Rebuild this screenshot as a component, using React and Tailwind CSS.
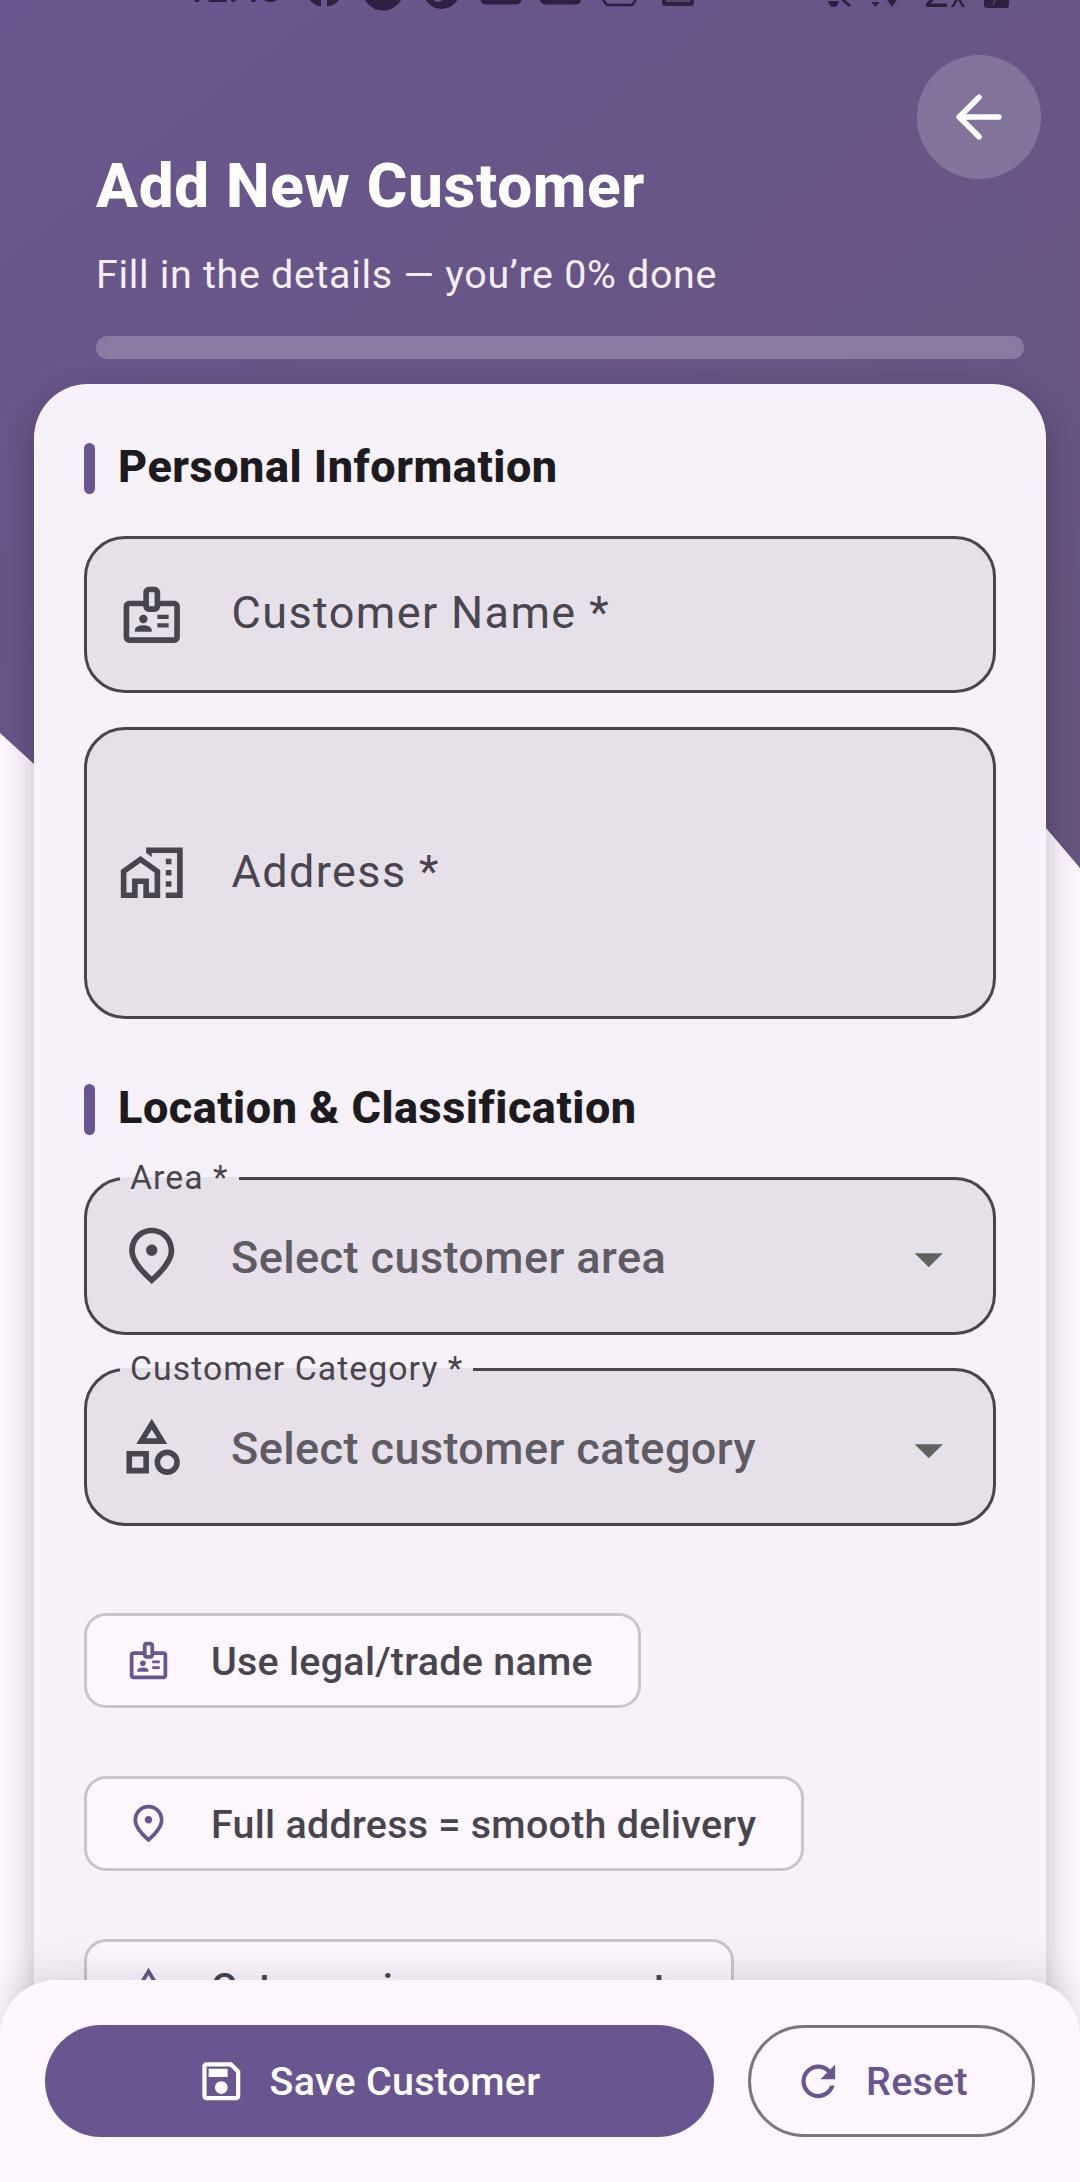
import React from "react";
import {
  MdOutlineBadge,
  MdOutlineHomeWork,
  MdOutlineFmdGood,
  MdOutlineCategory,
  MdOutlineSave,
  MdRefresh,
  MdArrowDropDown,
} from "react-icons/md";

function StatusBar() {
  return (
    <div className="flex h-[12px] items-start text-[#2c2140]">
      <span className="ml-[185px] -mt-[34px] w-[92px] text-[38px] font-medium leading-[46px]">12:43</span>
      <svg className="ml-[31px] shrink-0" width="412" height="12" viewBox="308 0 412 12" fill="currentColor">
        <path d="M310 0h11v6.500q-7-1-11-6.500zM327 0h12q-4 5.500-12 6.500z" />
        <circle cx="383" cy="-10.500" r="21" />
        <circle cx="441.500" cy="-9.500" r="18.500" />
        <path d="M434 0q2 4 9 0z" fill="#69568f" />
        <path d="M480.500 0h41q-1 4.500-6 4.500h-29q-5 0-6-4.500zM540 0h41q-1 4.500-6 4.500h-29q-5 0-6-4.500z" />
        <path d="M603 0l4 5h25l4-5" fill="none" stroke="currentColor" strokeWidth="2.500" />
        <path d="M662 0h32v3q0 3-3 3h-26q-3 0-3-3z" />
        <path d="M666 1h24" stroke="#54456f" strokeWidth="2" />
      </svg>
      <svg className="ml-[108px] shrink-0" width="182" height="12" viewBox="828 0 182 12" fill="currentColor">
        <path d="M828 1h11q-1 6-5.500 6t-5.500-6zM841 0h4l6 5-2 2z" />
        <path d="M871 2h9l-4.500 5zM887 0h10l-5 7z" />
        <path d="M929 0h5l-3.500 3.500H947V7h-21V4zM951 7l4-7h3l-4 7zM958 0h3l4 7h-3z" />
        <path d="M984 0h25v5q0 3-3 3h-19q-3 0-3-3z" />
        <path d="M995 0l-2 5" stroke="#69568f" strokeWidth="1" />
      </svg>
    </div>
  );
}

function SectionTitle({ children, className = "" }) {
  return (
    <div className={"flex h-[51px] items-center " + className}>
      <span className="h-[51px] w-[11px] rounded-full bg-[#69558f]" />
      <h2 className="-mt-[4px] ml-[23px] text-[45px] font-extrabold leading-[51px] tracking-[0.52px] text-[#1d1b20]">{children}</h2>
    </div>
  );
}

function Field({ icon: Icon, label, className }) {
  return (
    <div className={"flex items-center rounded-[41px] border-[3px] border-[#49454f] bg-[#e6e0e8] pl-[31px] text-[#49454f] " + className}>
      <Icon className="size-[67.500px]" />
      <span className="-mt-[4px] ml-[46px] text-[45px] leading-[67px] tracking-[1.4px]">{label}</span>
    </div>
  );
}

function SelectField({ icon: Icon, label, hint, className }) {
  return (
    <fieldset className={"relative h-[158px] rounded-[41px] bg-[#e6e0e8] " + className}>
      <fieldset className="absolute inset-x-0 -top-[22px] bottom-0 rounded-[41px] border-[3px] border-[#49454f] pl-[33px]">
        <legend className="h-[47px] px-[10px] text-[33.750px] leading-[45px] tracking-[1.06px] text-[#49454f]">{label}</legend>
      </fieldset>
      <div className="flex h-[158px] items-center pl-[34px] pr-[34px]">
        <Icon className="size-[67.500px] text-[#49454f]" />
        <span className="mt-[2px] ml-[45.500px] grow text-[45px] font-medium leading-[67px] tracking-[0.42px] text-[#5f5b62]">{hint}</span>
        <MdArrowDropDown className="mt-[6px] size-[67.500px] text-[#616161]" />
      </div>
    </fieldset>
  );
}

function Tip({ icon: Icon, children, className }) {
  return (
    <div className={"flex h-[95px] items-center rounded-[22px] border-[3px] border-[#cac4cf] bg-[#fef7ff] pl-[39px] " + className}>
      <Icon className="size-[45px] text-[#69558f]" />
      <span className="mt-[3px] ml-[40px] whitespace-nowrap text-[39.400px] font-medium leading-[56px] tracking-[0.28px] text-[#49454f]">{children}</span>
    </div>
  );
}

export default function App() {
  return (
    <div className="h-[2182px] w-[1080px] overflow-hidden bg-[#fef7ff] font-['Roboto',sans-serif]">
      <main className="h-[2040px] overflow-hidden">
        <header className="h-[868px] bg-linear-to-br from-[#69568e] to-[#67557f] [clip-path:polygon(0_0,100%_0,100%_868px,1046px_828px,540px_764px,34px_764px,0_733px)]">
          <StatusBar />
          <div className="flex h-[372px] pl-[96px] pr-[39px]">
            <div className="w-[820px] pt-[138px]">
              <h1 className="text-[62px] font-extrabold leading-[72px] tracking-[0.7px] text-white">Add New Customer</h1>
              <p className="mt-[25px] text-[39.400px] leading-[56px] tracking-[0.7px] text-[#f4eff7]">Fill in the details — you’re 0% done</p>
              <div className="mt-[33px] h-[22.500px] w-[928px] rounded-full bg-white/22" />
            </div>
            <button className="ml-auto mt-[43px] flex size-[124px] items-center justify-center rounded-full bg-white/18">
              <svg className="size-[68px]" viewBox="0 0 24 24" fill="none" stroke="white" strokeWidth="2" strokeLinecap="round" strokeLinejoin="round">
                <path d="M19 12H5.200M12 5l-7 7 7 7" />
              </svg>
            </button>
          </div>
        </header>

        <section className="relative mx-[34px] -mt-[484px] h-[1800px] rounded-[54px] bg-[#f7f1fa] px-[50px] pt-[59px] shadow-[0_10px_34px_rgba(0,0,0,0.24)]">
          <SectionTitle>Personal Information</SectionTitle>
          <Field icon={MdOutlineBadge} label="Customer Name *" className="mt-[42px] h-[157px]" />
          <Field icon={MdOutlineHomeWork} label="Address *" className="mt-[34px] h-[292px]" />
          <SectionTitle className="mt-[65px]">Location &amp; Classification</SectionTitle>
          <SelectField icon={MdOutlineFmdGood} label="Area *" hint="Select customer area" className="mt-[42px]" />
          <SelectField icon={MdOutlineCategory} label="Customer Category *" hint="Select customer category" className="mt-[33px]" />
          <div className="mt-[87px] flex flex-col gap-[68px]">
            <Tip icon={MdOutlineBadge} className="w-[557px]">Use legal/trade name</Tip>
            <Tip icon={MdOutlineFmdGood} className="w-[720px]">Full address = smooth delivery</Tip>
            <Tip icon={MdOutlineCategory} className="w-[650px]">Category improves reports</Tip>
          </div>
        </section>
      </main>

      <footer className="relative -mt-[60px] flex h-[202px] gap-[34px] rounded-t-[56px] bg-[#fef7ff] px-[45px] pt-[45px] shadow-[0_-6px_40px_rgba(0,0,0,0.12)]">
        <button className="flex h-[112px] w-[669px] items-center rounded-full bg-[#69558f] pl-[151px] text-white">
          <MdOutlineSave className="size-[50.600px]" />
          <span className="mt-[2px] ml-[23px] text-[39.400px] font-medium leading-[56px] tracking-[0.28px]">Save Customer</span>
        </button>
        <button className="flex h-[112px] w-[287px] items-center rounded-full border-[3px] border-[#7a757f] pl-[42px] text-[#69558f]">
          <MdRefresh className="size-[50.600px]" />
          <span className="mt-[2px] ml-[22.500px] text-[39.400px] font-medium leading-[56px] tracking-[0.28px]">Reset</span>
        </button>
      </footer>
    </div>
  );
}
